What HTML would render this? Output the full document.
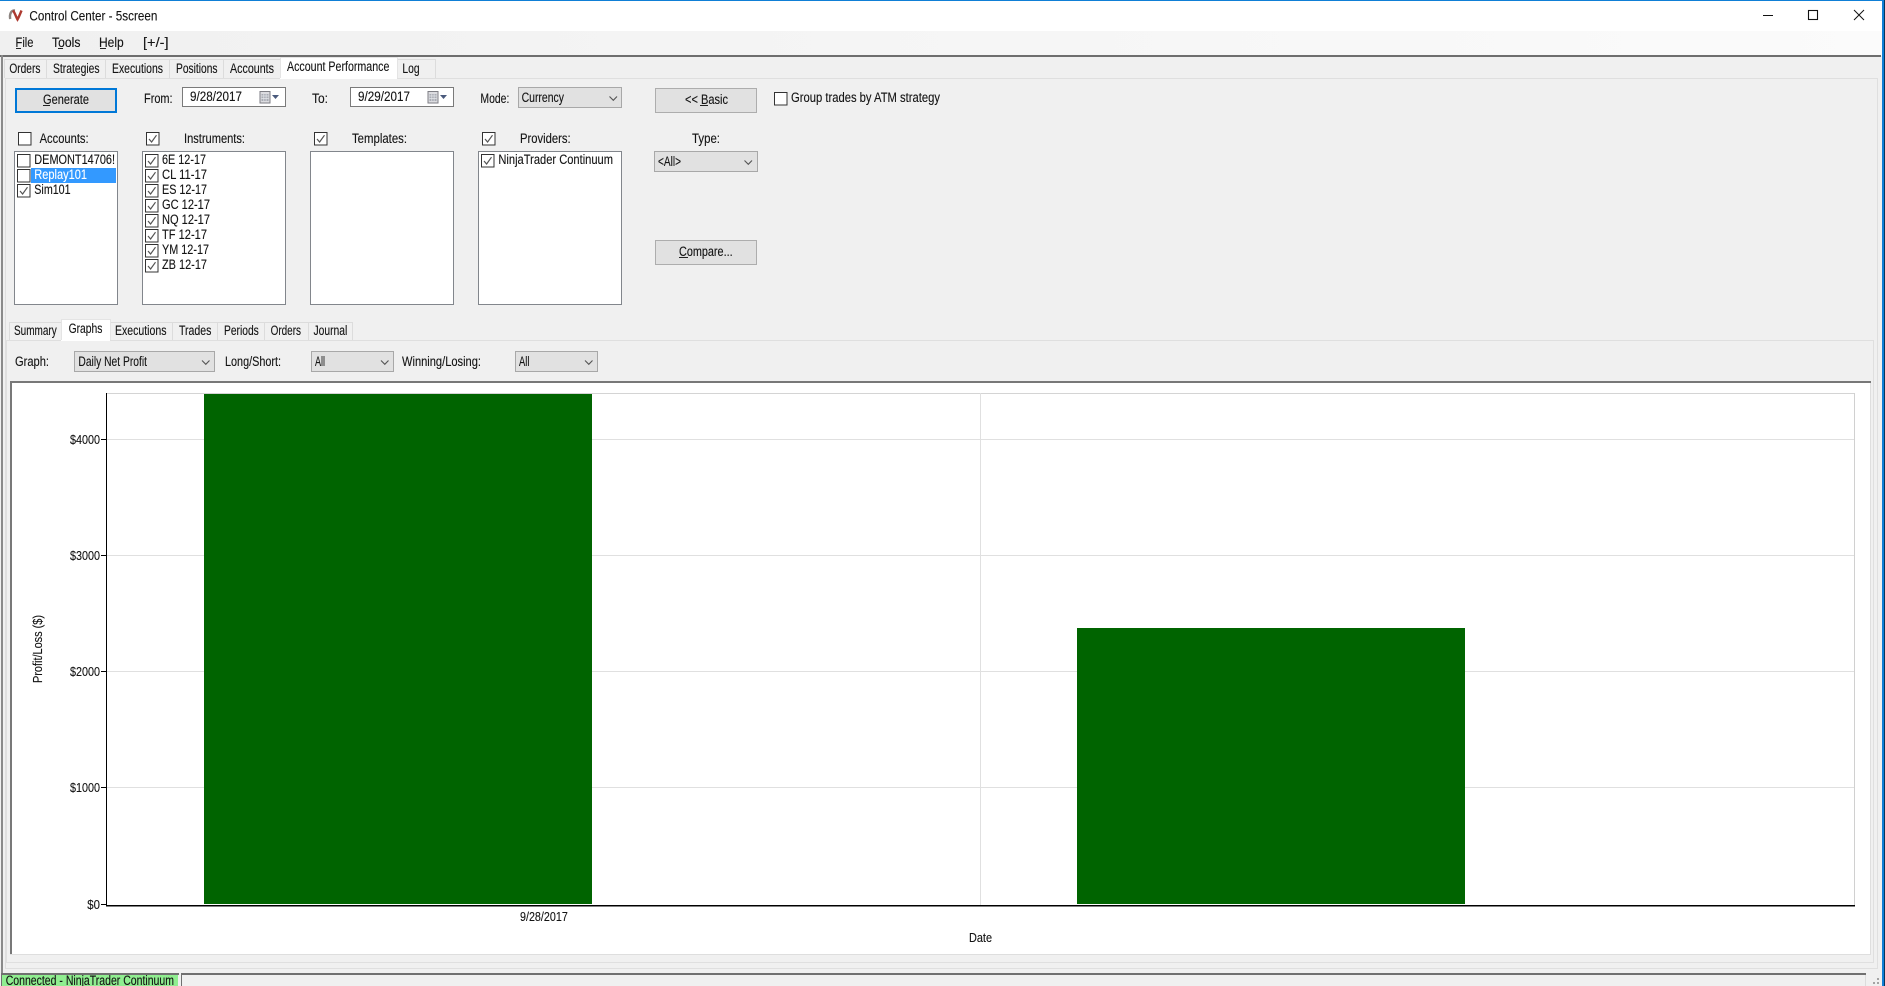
<!DOCTYPE html>
<html lang="en">
<head>
<meta charset="utf-8">
<title>Control Center - 5screen</title>
<style>
html,body{margin:0;padding:0;width:1885px;height:986px;overflow:hidden;background:#f0f0f0}
svg{display:block;position:absolute;left:0;top:0}
text{font-family:"Liberation Sans",sans-serif;font-size:13.5px;fill:#141414;stroke:#141414;stroke-width:.12px}
.c{font-size:12.5px}
.r{shape-rendering:crispEdges}
</style>
</head>
<body>
<svg width="1885" height="986" viewBox="0 0 1885 986" xmlns="http://www.w3.org/2000/svg">
<defs>
<linearGradient id="mg" x1="0" x2="1" y1="0" y2="0"><stop offset="0" stop-color="#f0f0f0"/><stop offset="1" stop-color="#fbfbfb"/></linearGradient>
<symbol id="cb" width="14" height="14" viewBox="0 0 14 14" overflow="visible"><rect x="0.5" y="0.5" width="12.5" height="12.5" fill="#fff" stroke="#333"/></symbol>
<symbol id="ck" width="14" height="14" viewBox="0 0 14 14" overflow="visible"><rect x="0.5" y="0.5" width="12.5" height="12.5" fill="#fff" stroke="#333"/><path d="M3 7l2.6 3L10.5 3.2" fill="none" stroke="#555" stroke-width="1.2"/></symbol>
<symbol id="cv" width="9" height="5" viewBox="0 0 9 5" overflow="visible"><path d="M0.5 0.5L4.3 4.3L8 0.5" fill="none" stroke="#555" stroke-width="1.1"/></symbol>
<symbol id="cal" width="20" height="13" viewBox="0 0 20 13" overflow="visible"><rect x="0.5" y="0.5" width="10" height="11.5" fill="#dcdce0" stroke="#7e7e84"/><rect x="2" y="3" width="7" height="7" fill="#a9acb4"/><path d="M2 5h7M2 7.4h7M4.3 3v7M6.6 3v7" stroke="#e4e6ea" stroke-width=".7"/><path d="M12.5 4h7L16 8z" fill="#4a5a7c"/></symbol>
</defs>

<!-- window chrome -->
<rect class="r" x="0" y="0" width="1885" height="986" fill="#f0f0f0"/>
<rect class="r" x="0" y="0" width="1885" height="31" fill="#fff"/>
<rect class="r" x="0" y="0" width="1885" height="1" fill="#0f7fd6"/>
<rect class="r" x="0" y="31" width="1882" height="25" fill="url(#mg)"/>
<rect class="r" x="1882" y="0" width="2" height="986" fill="#0f7fd6"/>
<rect class="r" x="1884" y="0" width="1" height="986" fill="#06365e"/>

<!-- logo -->
<path d="M15 10.5C11 10.2 9.3 14 10.2 19" fill="none" stroke="#8c8480" stroke-width="2.4"/>
<path d="M13 10.5C15 13 16 17 17.5 19.5C19 17 20.5 13 21.5 10.5" fill="none" stroke="#ad3a30" stroke-width="2.4"/>
<text x="29.4" y="20.5" textLength="128" lengthAdjust="spacingAndGlyphs">Control Center - 5screen</text>

<!-- window buttons -->
<rect class="r" x="1763" y="15" width="10" height="1" fill="#111"/>
<rect x="1808.5" y="10.5" width="9" height="9" fill="none" stroke="#111" stroke-width="1.1"/>
<path d="M1854 10l10 10M1864 10l-10 10" stroke="#111" stroke-width="1"/>

<!-- menu -->
<text x="15.5" y="47" textLength="18" lengthAdjust="spacingAndGlyphs">File</text>
<text x="52" y="47" textLength="28.4" lengthAdjust="spacingAndGlyphs">Tools</text>
<text x="99" y="47" textLength="24.7" lengthAdjust="spacingAndGlyphs">Help</text>
<text x="143" y="47" textLength="25.6" lengthAdjust="spacingAndGlyphs">[+/-]</text>
<rect class="r" x="16" y="48" width="5" height="1" fill="#222"/>
<rect class="r" x="58" y="48" width="5" height="1" fill="#222"/>
<rect class="r" x="100" y="48" width="6" height="1" fill="#222"/>

<!-- main frame -->
<rect class="r" x="0" y="55" width="1881" height="2" fill="#6e6e6e"/>
<rect class="r" x="1" y="55" width="2" height="918" fill="#8a8a8a"/>
<rect class="r" x="5" y="78" width="1873" height="1" fill="#dfdfdf"/>
<rect class="r" x="5" y="78" width="1" height="890" fill="#dfdfdf"/>
<rect class="r" x="1877" y="78" width="1" height="890" fill="#dfdfdf"/>
<rect class="r" x="5" y="968" width="1873" height="1" fill="#dfdfdf"/>

<!-- top tabs -->
<rect class="r" x="4" y="59" width="431" height="19" fill="#f0f0f0"/>
<path class="r" d="M4.5 78V59.5H435.5V78M46.5 60V78M105.5 60V78M169.5 60V78M223.5 60V78" fill="none" stroke="#dcdcdc"/>
<rect class="r" x="280" y="57" width="117" height="22" fill="#fff"/>
<path class="r" d="M280.5 78V57.5H397.5V78" fill="none" stroke="#e4e4e4"/>
<text x="9.4" y="73" textLength="31" lengthAdjust="spacingAndGlyphs">Orders</text>
<text x="53" y="73" textLength="46.6" lengthAdjust="spacingAndGlyphs">Strategies</text>
<text x="112" y="73" textLength="51" lengthAdjust="spacingAndGlyphs">Executions</text>
<text x="176" y="73" textLength="41.5" lengthAdjust="spacingAndGlyphs">Positions</text>
<text x="230" y="73" textLength="44" lengthAdjust="spacingAndGlyphs">Accounts</text>
<text x="287" y="71" textLength="102.4" lengthAdjust="spacingAndGlyphs">Account Performance</text>
<text x="402.4" y="73" textLength="17.2" lengthAdjust="spacingAndGlyphs">Log</text>

<!-- top controls -->
<rect class="r" x="15" y="88" width="102" height="25" fill="#0078d7"/>
<rect class="r" x="17" y="90" width="98" height="21" fill="#e1e1e1"/>
<text x="43" y="104" textLength="46" lengthAdjust="spacingAndGlyphs">Generate</text>
<rect class="r" x="43" y="105" width="7" height="1" fill="#222"/>

<text x="144" y="103" textLength="28.6" lengthAdjust="spacingAndGlyphs">From:</text>
<rect class="r" x="182.5" y="87.5" width="103" height="19" fill="#fff" stroke="#7a7a7a"/>
<text x="190" y="101" textLength="52" lengthAdjust="spacingAndGlyphs">9/28/2017</text>
<use href="#cal" x="259.5" y="91"/>

<text x="312" y="103" textLength="16" lengthAdjust="spacingAndGlyphs">To:</text>
<rect class="r" x="350.5" y="87.5" width="103" height="19" fill="#fff" stroke="#7a7a7a"/>
<text x="358" y="101" textLength="52" lengthAdjust="spacingAndGlyphs">9/29/2017</text>
<use href="#cal" x="427.5" y="91"/>

<text x="480.4" y="103" textLength="29" lengthAdjust="spacingAndGlyphs">Mode:</text>
<rect class="r" x="518.5" y="87.5" width="103" height="20" fill="#e1e1e1" stroke="#a8a8a8"/>
<text x="521.6" y="102" textLength="42.4" lengthAdjust="spacingAndGlyphs">Currency</text>
<use href="#cv" x="609" y="96"/>

<rect class="r" x="655.5" y="88.5" width="101" height="24" fill="#e1e1e1" stroke="#adadad"/>
<text x="685" y="104" textLength="43" lengthAdjust="spacingAndGlyphs">&lt;&lt; Basic</text>
<rect class="r" x="700" y="105" width="8" height="1" fill="#222"/>

<use href="#cb" x="774" y="92"/>
<text x="791" y="102" textLength="149" lengthAdjust="spacingAndGlyphs">Group trades by ATM strategy</text>

<!-- list headers -->
<use href="#cb" x="18" y="132"/>
<text x="39.6" y="143" textLength="49" lengthAdjust="spacingAndGlyphs">Accounts:</text>
<use href="#ck" x="146" y="132"/>
<text x="184" y="143" textLength="61" lengthAdjust="spacingAndGlyphs">Instruments:</text>
<use href="#ck" x="314" y="132"/>
<text x="352" y="143" textLength="55" lengthAdjust="spacingAndGlyphs">Templates:</text>
<use href="#ck" x="482" y="132"/>
<text x="520" y="143" textLength="50.6" lengthAdjust="spacingAndGlyphs">Providers:</text>

<!-- lists -->
<rect class="r" x="14.5" y="151.5" width="103" height="153" fill="#fff" stroke="#82868c"/>
<rect class="r" x="142.5" y="151.5" width="143" height="153" fill="#fff" stroke="#82868c"/>
<rect class="r" x="310.5" y="151.5" width="143" height="153" fill="#fff" stroke="#82868c"/>
<rect class="r" x="478.5" y="151.5" width="143" height="153" fill="#fff" stroke="#82868c"/>

<rect class="r" x="31" y="168" width="85" height="15" fill="#3399ff"/>
<use href="#cb" x="17" y="154"/>
<text x="34.3" y="164" textLength="80.7" lengthAdjust="spacingAndGlyphs">DEMONT14706!</text>
<use href="#cb" x="17" y="169"/>
<text x="34.3" y="179" textLength="52.7" lengthAdjust="spacingAndGlyphs" style="fill:#fff;stroke:#fff">Replay101</text>
<use href="#ck" x="17" y="184"/>
<text x="34.3" y="194" textLength="36.3" lengthAdjust="spacingAndGlyphs">Sim101</text>

<use href="#ck" x="145" y="154"/><text x="162" y="164" textLength="44" lengthAdjust="spacingAndGlyphs">6E 12-17</text>
<use href="#ck" x="145" y="169"/><text x="162" y="179" textLength="45" lengthAdjust="spacingAndGlyphs">CL 11-17</text>
<use href="#ck" x="145" y="184"/><text x="162" y="194" textLength="45" lengthAdjust="spacingAndGlyphs">ES 12-17</text>
<use href="#ck" x="145" y="199"/><text x="162" y="209" textLength="48" lengthAdjust="spacingAndGlyphs">GC 12-17</text>
<use href="#ck" x="145" y="214"/><text x="162" y="224" textLength="48" lengthAdjust="spacingAndGlyphs">NQ 12-17</text>
<use href="#ck" x="145" y="229"/><text x="162" y="239" textLength="45" lengthAdjust="spacingAndGlyphs">TF 12-17</text>
<use href="#ck" x="145" y="244"/><text x="162" y="254" textLength="47" lengthAdjust="spacingAndGlyphs">YM 12-17</text>
<use href="#ck" x="145" y="259"/><text x="162" y="269" textLength="45" lengthAdjust="spacingAndGlyphs">ZB 12-17</text>

<use href="#ck" x="481" y="154"/>
<text x="498.4" y="164" textLength="114.6" lengthAdjust="spacingAndGlyphs">NinjaTrader Continuum</text>

<text x="692" y="143" textLength="28" lengthAdjust="spacingAndGlyphs">Type:</text>
<rect class="r" x="654.5" y="151.5" width="103" height="20" fill="#e1e1e1" stroke="#a8a8a8"/>
<text x="658" y="166" textLength="23" lengthAdjust="spacingAndGlyphs">&lt;All&gt;</text>
<use href="#cv" x="744" y="160"/>

<rect class="r" x="655.5" y="240.5" width="101" height="24" fill="#e1e1e1" stroke="#adadad"/>
<text x="679" y="256" textLength="53.6" lengthAdjust="spacingAndGlyphs">Compare...</text>
<rect class="r" x="679" y="257" width="9" height="1" fill="#222"/>

<!-- lower panel -->
<rect class="r" x="6" y="340" width="1868" height="1" fill="#dfdfdf"/>
<rect class="r" x="6" y="340" width="1" height="622" fill="#dfdfdf"/>
<rect class="r" x="1873" y="340" width="1" height="622" fill="#dfdfdf"/>
<rect class="r" x="6" y="962" width="1868" height="1" fill="#dfdfdf"/>

<path class="r" d="M9.5 340V322.5H352.5V340M172.5 323V340M217.5 323V340M264.5 323V340M308.5 323V340" fill="none" stroke="#dcdcdc"/>
<rect class="r" x="61" y="319" width="49" height="22" fill="#fff"/>
<path class="r" d="M61.5 340V319.5H110.5V340" fill="none" stroke="#e4e4e4"/>
<text x="14" y="335" textLength="42.7" lengthAdjust="spacingAndGlyphs">Summary</text>
<text x="68.6" y="333" textLength="33.8" lengthAdjust="spacingAndGlyphs">Graphs</text>
<text x="115" y="335" textLength="51.5" lengthAdjust="spacingAndGlyphs">Executions</text>
<text x="179" y="335" textLength="32.4" lengthAdjust="spacingAndGlyphs">Trades</text>
<text x="224" y="335" textLength="34.8" lengthAdjust="spacingAndGlyphs">Periods</text>
<text x="270.6" y="335" textLength="30.4" lengthAdjust="spacingAndGlyphs">Orders</text>
<text x="313.5" y="335" textLength="33.8" lengthAdjust="spacingAndGlyphs">Journal</text>

<text x="15" y="366" textLength="34" lengthAdjust="spacingAndGlyphs">Graph:</text>
<rect class="r" x="74.5" y="351.5" width="140" height="20" fill="#e1e1e1" stroke="#a8a8a8"/>
<text x="78.4" y="366" textLength="68.6" lengthAdjust="spacingAndGlyphs">Daily Net Profit</text>
<use href="#cv" x="201.5" y="360"/>
<text x="225" y="366" textLength="56" lengthAdjust="spacingAndGlyphs">Long/Short:</text>
<rect class="r" x="311.5" y="351.5" width="82" height="20" fill="#e1e1e1" stroke="#a8a8a8"/>
<text x="315" y="366" textLength="10" lengthAdjust="spacingAndGlyphs">All</text>
<use href="#cv" x="380.5" y="360"/>
<text x="402" y="366" textLength="79" lengthAdjust="spacingAndGlyphs">Winning/Losing:</text>
<rect class="r" x="515.5" y="351.5" width="82" height="20" fill="#e1e1e1" stroke="#a8a8a8"/>
<text x="519" y="366" textLength="10.4" lengthAdjust="spacingAndGlyphs">All</text>
<use href="#cv" x="584.5" y="360"/>

<!-- chart frame -->
<rect class="r" x="11" y="383" width="1860" height="571" fill="#fff"/>
<rect class="r" x="10" y="381" width="1861" height="2" fill="#787878"/>
<rect class="r" x="10" y="381" width="2" height="574" fill="#787878"/>
<rect class="r" x="10" y="954" width="1861" height="1" fill="#dedede"/>
<rect class="r" x="1870" y="383" width="1" height="572" fill="#dedede"/>

<!-- plot grid -->
<rect class="r" x="106" y="393" width="1749" height="1" fill="#d4d4d4"/>
<rect class="r" x="1854" y="393" width="1" height="512" fill="#d0d0d0"/>
<rect class="r" x="107" y="439" width="1747" height="1" fill="#e0e0e0"/>
<rect class="r" x="107" y="555" width="1747" height="1" fill="#e0e0e0"/>
<rect class="r" x="107" y="671" width="1747" height="1" fill="#e0e0e0"/>
<rect class="r" x="107" y="787" width="1747" height="1" fill="#e0e0e0"/>
<rect class="r" x="980" y="393" width="1" height="512" fill="#e0e0e0"/>

<!-- bars -->
<rect class="r" x="204" y="394" width="388" height="510" fill="#006400"/>
<rect class="r" x="1077" y="628" width="388" height="276" fill="#006400"/>

<!-- axes -->
<rect class="r" x="106" y="393" width="1" height="513" fill="#000"/>
<rect class="r" x="106" y="905" width="1749" height="1.5" fill="#000"/>
<rect class="r" x="101" y="439" width="5" height="1" fill="#000"/>
<rect class="r" x="101" y="555" width="5" height="1" fill="#000"/>
<rect class="r" x="101" y="671" width="5" height="1" fill="#000"/>
<rect class="r" x="101" y="787" width="5" height="1" fill="#000"/>
<rect class="r" x="101" y="904" width="5" height="1" fill="#000"/>

<text class="c" x="70" y="444" textLength="30" lengthAdjust="spacingAndGlyphs">$4000</text>
<text class="c" x="70" y="560" textLength="30" lengthAdjust="spacingAndGlyphs">$3000</text>
<text class="c" x="70" y="676" textLength="30" lengthAdjust="spacingAndGlyphs">$2000</text>
<text class="c" x="70" y="792" textLength="30" lengthAdjust="spacingAndGlyphs">$1000</text>
<text class="c" x="87.3" y="909" textLength="12.7" lengthAdjust="spacingAndGlyphs">$0</text>
<text class="c" x="520" y="921" textLength="47.8" lengthAdjust="spacingAndGlyphs">9/28/2017</text>
<text class="c" x="969" y="942" textLength="23" lengthAdjust="spacingAndGlyphs">Date</text>
<text class="c" transform="translate(42 683) rotate(-90)" x="0" y="0" textLength="68" lengthAdjust="spacingAndGlyphs">Profit/Loss ($)</text>

<!-- status bar -->
<rect class="r" x="0" y="973" width="179" height="13" fill="#f0f0f0"/>
<rect class="r" x="1" y="973" width="178" height="2" fill="#707070"/>
<rect class="r" x="1" y="973" width="1" height="13" fill="#707070"/>
<rect class="r" x="2" y="975" width="176" height="11" fill="#90ee90"/>
<text x="5.7" y="985" textLength="168.3" lengthAdjust="spacingAndGlyphs">Connected - NinjaTrader Continuum</text>
<rect class="r" x="181" y="973" width="1685" height="2" fill="#707070"/>
<rect class="r" x="181" y="973" width="1" height="13" fill="#707070"/>
<rect class="r" x="1865" y="975" width="1" height="11" fill="#dcdcdc"/>

<!-- grip -->
<g fill="#a4a4a4" class="r">
<rect x="1877" y="978" width="2" height="2"/>
<rect x="1873" y="982" width="2" height="2"/>
<rect x="1877" y="982" width="2" height="2"/>
</g>
</svg>
</body>
</html>
